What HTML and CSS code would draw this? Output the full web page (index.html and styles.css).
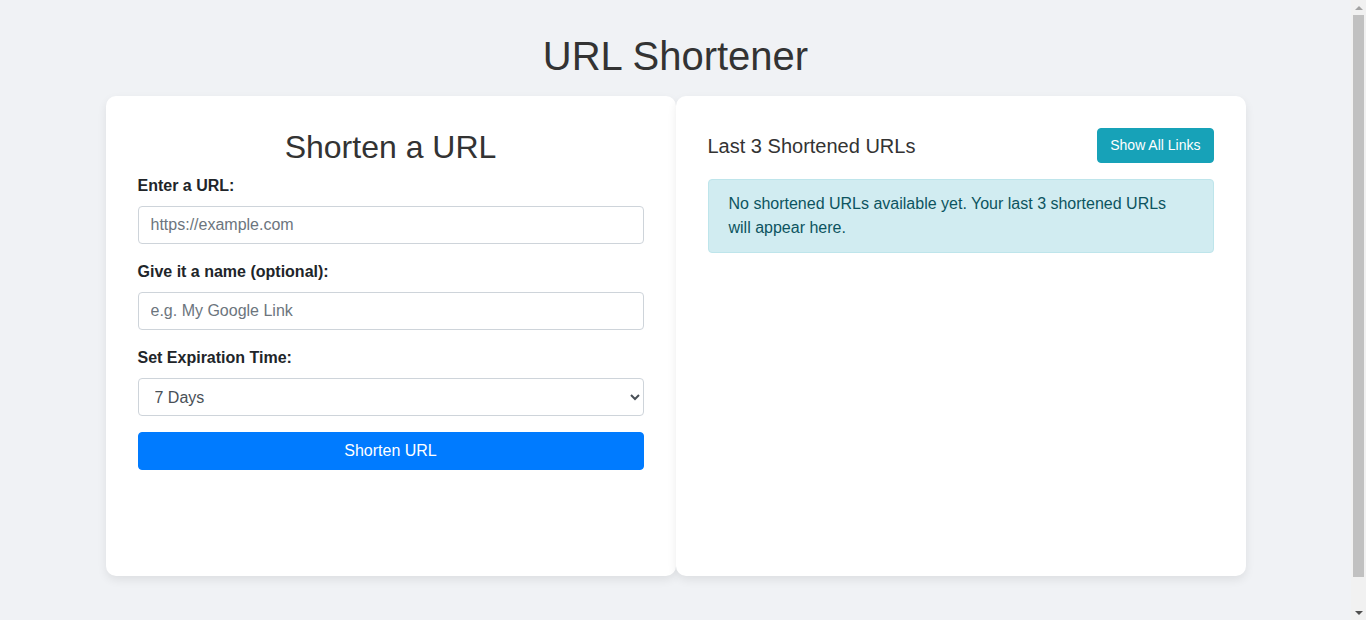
FILE: index.html
```html
<!DOCTYPE html>
<html lang="en">
<head>
<meta charset="utf-8">
<title>URL Shortener</title>
<link rel="stylesheet" href="styles.css">
</head>
<body>
  <h1 class="page-title">URL Shortener</h1>
  <main class="panels">
    <section class="card">
      <h2 class="card-title">Shorten a URL</h2>
      <form class="form">
        <div class="form-group">
          <label class="label" for="url">Enter a URL:</label>
          <input class="control" id="url" type="text" placeholder="https://example.com">
        </div>
        <div class="form-group">
          <label class="label" for="name">Give it a name (optional):</label>
          <input class="control" id="name" type="text" placeholder="e.g. My Google Link">
        </div>
        <div class="form-group">
          <label class="label" for="exp">Set Expiration Time:</label>
          <select class="control select" id="exp">
            <option>1 Hour</option>
            <option>1 Day</option>
            <option selected>7 Days</option>
            <option>30 Days</option>
          </select>
        </div>
        <button class="btn btn-primary" type="button">Shorten URL</button>
      </form>
    </section>
    <section class="card">
      <div class="recent-head">
        <h4 class="recent-title">Last 3 Shortened URLs</h4>
        <button class="btn btn-info" type="button">Show All Links</button>
      </div>
      <div class="alert">No shortened URLs available yet. Your last 3 shortened URLs will appear here.</div>
    </section>
  </main>
  <div class="scrollbar" aria-hidden="true">
    <span class="sb-arrow sb-up"></span>
    <span class="sb-thumb"></span>
    <span class="sb-arrow sb-down"></span>
  </div>
</body>
</html>
```

FILE: styles.css
```css
* { box-sizing: border-box; }

html, body { margin: 0; }

body {
  background: #f0f2f5;
  font-family: "Liberation Sans", Arial, Helvetica, sans-serif;
  font-size: 16px;
  line-height: 1.5;
  color: #212529;
  padding: 32px 15px 75px 0;
}

.page-title {
  margin: 0 0 16px;
  text-align: center;
  font-size: 40px;
  font-weight: 400;
  line-height: 48px;
  color: #333;
}

.panels {
  width: 1140px;
  margin: 0 auto;
  display: grid;
  grid-template-columns: 1fr 1fr;
}

.card {
  background: #fff;
  border-radius: 10px;
  box-shadow: 0 4px 10px rgba(0, 0, 0, 0.08);
  padding: 32px;
  min-height: 480px;
}

.card-title {
  margin: 0 0 8px;
  text-align: center;
  font-size: 32px;
  font-weight: 400;
  line-height: 38px;
  color: #333;
}

.form-group { margin-bottom: 16px; }

.label {
  display: block;
  margin-bottom: 8px;
  font-weight: 700;
  color: #212529;
}

.control {
  display: block;
  width: 100%;
  height: 38px;
  padding: 6px 12px;
  font-family: inherit;
  font-size: 16px;
  line-height: 1.5;
  color: #495057;
  background: #fff;
  border: 1px solid #ced4da;
  border-radius: 4px;
}

.control::placeholder { color: #6c757d; opacity: 1; }

.select { padding: 6px 12px; }

.btn {
  display: inline-block;
  font-family: inherit;
  font-size: 16px;
  line-height: 1.5;
  padding: 6px 12px;
  border: 1px solid transparent;
  border-radius: 4px;
  color: #fff;
  cursor: pointer;
}

.btn-primary {
  display: block;
  width: 100%;
  background: #007bff;
  border-color: #007bff;
}

.btn-info {
  background: #17a2b8;
  border-color: #17a2b8;
  font-size: 14px;
}

.recent-head {
  display: flex;
  align-items: center;
  justify-content: space-between;
  margin-bottom: 16px;
}

.recent-title {
  margin: 0;
  font-size: 20px;
  font-weight: 400;
  line-height: 24px;
  color: #333;
}

.alert {
  padding: 12px 20px;
  background: #d1ecf1;
  border: 1px solid #bee5eb;
  border-radius: 4px;
  color: #0c5460;
}

/* decorative classic scrollbar (the renderer hides native ones) */
.scrollbar {
  position: fixed;
  top: 0;
  right: 0;
  width: 15px;
  height: 100vh;
  background: #f1f1f1;
  display: flex;
  flex-direction: column;
  align-items: center;
}

.sb-arrow {
  flex: 0 0 15px;
  width: 15px;
  display: flex;
  align-items: center;
  justify-content: center;
}

.sb-arrow::before {
  content: "";
  width: 0;
  height: 0;
  border-left: 4px solid transparent;
  border-right: 4px solid transparent;
}

.sb-up::before { border-bottom: 4px solid #a3a3a3; }
.sb-down::before { border-top: 4px solid #505050; }

.sb-thumb {
  width: 11px;
  height: 562px;
  background: #c1c1c1;
}

.sb-down { margin-top: auto; }
```
